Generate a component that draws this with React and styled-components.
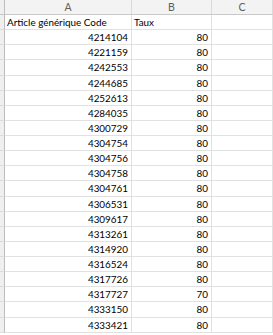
import React from "react";
import styled, { createGlobalStyle } from "styled-components";

const GlobalStyle = createGlobalStyle`
  html, body {
    margin: 0;
    padding: 0;
    background: #ffffff;
  }
  body {
    font-family: Lato, "Liberation Sans", sans-serif;
  }
`;

// grille : bandeau des lignes, colonnes A, B, C
const Sheet = styled.div`
  display: grid;
  grid-template-columns: 5px 127px 80px 61px;
  grid-template-rows: 15px;
  grid-auto-rows: 15.13px;
  width: 273px;
  height: 335px;
  overflow: hidden;
`;

const Corner = styled.div`
  box-sizing: border-box;
  background: #efefef;
  border-right: 1px solid #bdbdbd;
  border-bottom: 1px solid #c8c8c8;
`;

const ColHead = styled.div`
  box-sizing: border-box;
  background: #f3f3f3;
  border-right: 1px solid #dadada;
  border-bottom: 1px solid #c8c8c8;
  color: #5e5e5e;
  font-size: 10.5px;
  display: flex;
  align-items: center;
  justify-content: center;
  padding-bottom: 1px;
`;

const RowHead = styled.div`
  box-sizing: border-box;
  background: #efefef;
  border-right: 1px solid #bdbdbd;
  border-bottom: 1px solid #dcdcdc;
`;

const Cell = styled.div`
  box-sizing: border-box;
  border-right: 1px solid #e1e1e1;
  border-bottom: 1px solid #e1e1e1;
  color: #000000;
  font-size: 9.9px;
  display: flex;
  align-items: center;
  justify-content: ${(p) => (p.$num ? "flex-end" : "flex-start")};
  padding: 0 3px 0 2px;
  white-space: nowrap;
  overflow: hidden;
`;

const rows = [
  ["4214104", 80],
  ["4221159", 80],
  ["4242553", 80],
  ["4244685", 80],
  ["4252613", 80],
  ["4284035", 80],
  ["4300729", 80],
  ["4304754", 80],
  ["4304756", 80],
  ["4304758", 80],
  ["4304761", 80],
  ["4306531", 80],
  ["4309617", 80],
  ["4313261", 80],
  ["4314920", 80],
  ["4316524", 80],
  ["4317726", 80],
  ["4317727", 70],
  ["4333150", 80],
  ["4333421", 80],
];

function App() {
  return (
    <>
      <GlobalStyle />
      <Sheet>
        <Corner />
        <ColHead>A</ColHead>
        <ColHead>B</ColHead>
        <ColHead>C</ColHead>

        <RowHead />
        <Cell>Article générique Code</Cell>
        <Cell>Taux</Cell>
        <Cell />

        {rows.map(([code, taux]) => (
          <React.Fragment key={code}>
            <RowHead />
            <Cell $num>{code}</Cell>
            <Cell $num>{taux}</Cell>
            <Cell />
          </React.Fragment>
        ))}
      </Sheet>
    </>
  );
}

export default App;
